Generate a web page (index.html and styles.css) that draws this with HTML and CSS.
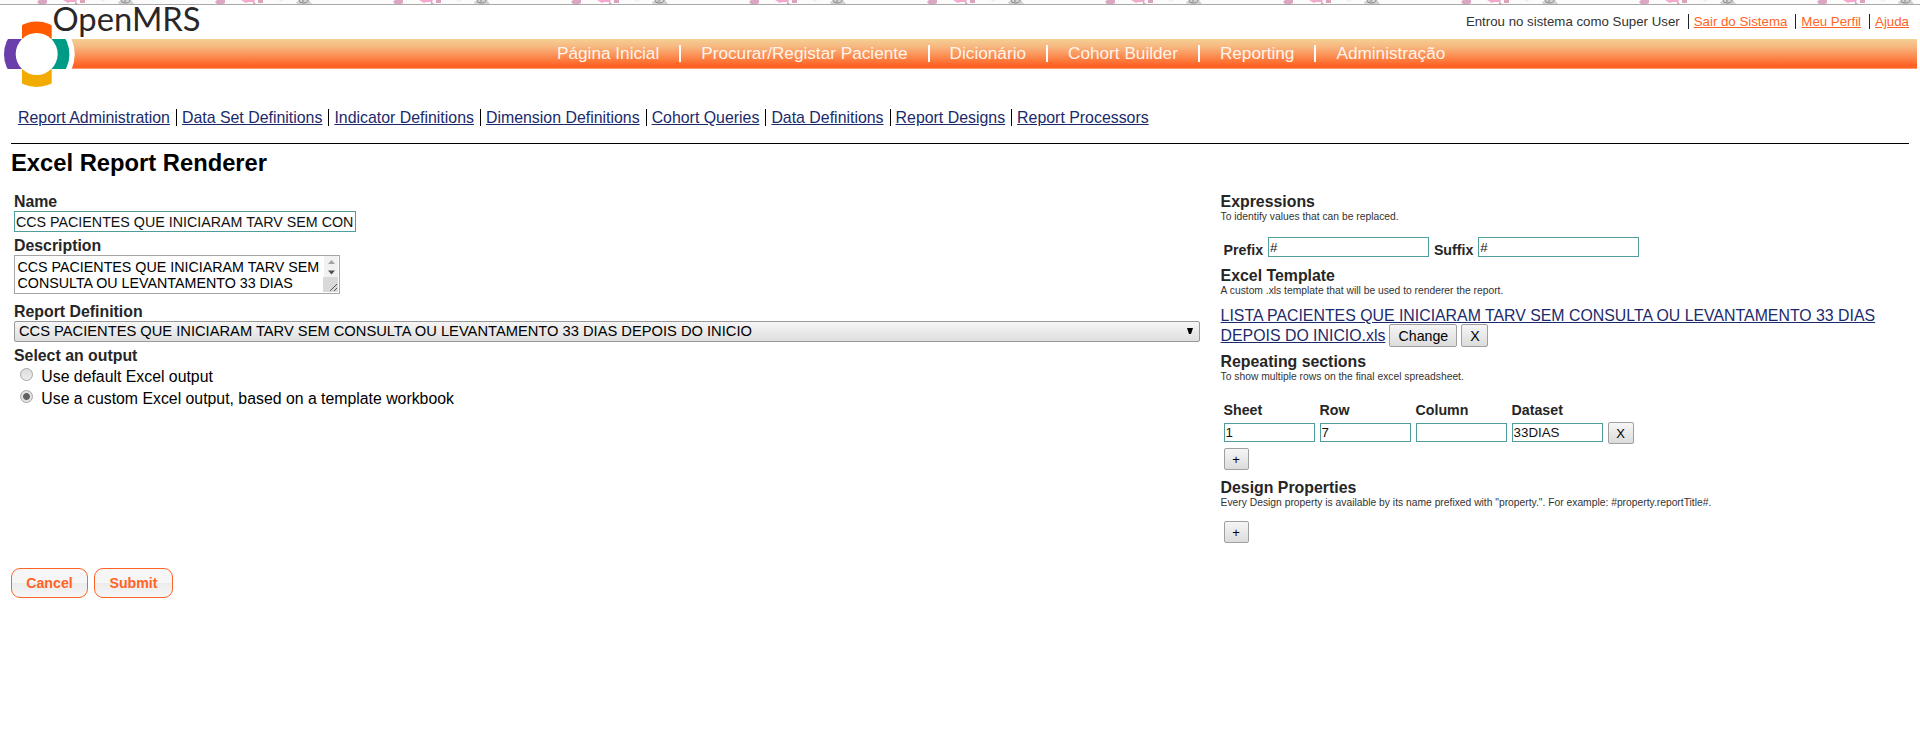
FILE: index.html
```html
<!DOCTYPE html>
<html lang="pt">
<head>
<meta charset="utf-8">
<title>OpenMRS - Excel Report Renderer</title>
<link rel="stylesheet" href="styles.css">
</head>
<body>
<svg class="strip" width="1920" height="5">
  <defs>
    <pattern id="flowers" width="178" height="5" patternUnits="userSpaceOnUse">
      <rect width="178" height="5" fill="#fbfbfb"/>
      <path d="M39 0h8v3l-2 1h-6l-2-2z" fill="#dda6c0"/>
      <path d="M63 0h14l-1 2h-6l-2 1z" fill="#f3a9cd"/>
      <path d="M75 1l3 3h-3zM80 0h5v3h-5z" fill="#dca3bd"/>
      <path d="M100 0h6l-3 2z" fill="#efefef"/>
      <path d="M118 2l4-2h9l3 4h-15z" fill="#d2d2d2"/>
      <path d="M121 0q0 3 4 3q5 0 5-3M125 0v2" fill="none" stroke="#888"/>
    </pattern>
  </defs>
  <rect width="1920" height="4" fill="url(#flowers)"/>
  <rect y="4" width="1920" height="1" fill="#a9a9a9"/>
</svg>

<header class="header">
  <ul class="user-bar">
    <li>Entrou no sistema como Super User</li>
    <li><a href="#">Sair do Sistema</a></li>
    <li><a href="#">Meu Perfil</a></li>
    <li><a href="#">Ajuda</a></li>
  </ul>
  <nav class="main-nav">
    <a href="#">Página Inicial</a>
    <a href="#">Procurar/Registar Paciente</a>
    <a href="#">Dicionário</a>
    <a href="#">Cohort Builder</a>
    <a href="#">Reporting</a>
    <a href="#">Administração</a>
  </nav>
  <svg class="logo" width="210" height="90" viewBox="0 0 210 90">
    <defs><clipPath id="disc"><circle cx="36.7" cy="54.3" r="32.7"/></clipPath></defs>
    <circle cx="36.7" cy="54.3" r="38" fill="#fff"/>
    <g clip-path="url(#disc)">
      <path d="M22 20h29.7v20H22z" fill="#ff5a00"/>
      <path d="M22 68h29.7v20H22z" fill="#f2ab00"/>
      <path d="M3 39h19v30H3z" fill="#6a3fac"/>
      <path d="M51.700 39h19v30h-19z" fill="#009b85"/>
    </g>
    <circle cx="36.7" cy="54" r="21" fill="#fff"/>
    <text class="logo-text" x="52.500" y="31" textLength="148" lengthAdjust="spacingAndGlyphs">OpenMRS</text>
  </svg>
</header>

<ul class="sub-nav">
  <li><a href="#">Report Administration</a></li>
  <li><a href="#">Data Set Definitions</a></li>
  <li><a href="#">Indicator Definitions</a></li>
  <li><a href="#">Dimension Definitions</a></li>
  <li><a href="#">Cohort Queries</a></li>
  <li><a href="#">Data Definitions</a></li>
  <li><a href="#">Report Designs</a></li>
  <li><a href="#">Report Processors</a></li>
</ul>

<main class="content">
  <h2 class="title">Excel Report Renderer</h2>
  <div class="columns">
    <section class="left">
      <div class="label">Name</div>
      <input class="field name" value="CCS PACIENTES QUE INICIARAM TARV SEM CON">
      <div class="label after-name">Description</div>
      <div class="textarea">
        <div class="textarea-text">CCS PACIENTES QUE INICIARAM TARV SEM<br>CONSULTA OU LEVANTAMENTO 33 DIAS</div>
        <svg class="scroll" width="16" height="37">
          <rect x="1" width="14" height="21" fill="#f1f1f1"/>
          <rect y="21" width="15" height="15" fill="#d9d9d9"/>
          <path d="M5 8l3.500-4 3.500 4z" fill="#a3a3a3"/>
          <path d="M5 14.500h7l-3.500 4z" fill="#505050"/>
          <path d="M7 35l7-7M11 35l3-3" stroke="#555" fill="none"/>
        </svg>
      </div>
      <div class="label after-area">Report Definition</div>
      <div class="select"><span>CCS PACIENTES QUE INICIARAM TARV SEM CONSULTA OU LEVANTAMENTO 33 DIAS DEPOIS DO INICIO</span>
        <svg width="6" height="7"><path d="M0 0h6L4 6h-2z" fill="#000"/></svg>
      </div>
      <div class="label after-name">Select an output</div>
      <label class="radio"><span class="dot"></span>Use default Excel output</label>
      <label class="radio"><span class="dot checked"></span>Use a custom Excel output, based on a template workbook</label>
    </section>

    <section class="right">
      <div class="label">Expressions</div>
      <div class="hint">To identify values that can be replaced.</div>
      <div class="affixes">
        <b>Prefix</b><input class="field affix" value="#">
        <b>Suffix</b><input class="field affix" value="#">
      </div>
      <div class="label template-label">Excel Template</div>
      <div class="hint">A custom .xls template that will be used to renderer the report.</div>
      <div class="file">
        <a href="#">LISTA PACIENTES QUE INICIARAM TARV SEM CONSULTA OU LEVANTAMENTO 33 DIAS</a>
        <div class="file-end"><a href="#">DEPOIS DO INICIO.xls</a><button class="btn change">Change</button><button class="btn remove">X</button></div>
      </div>
      <div class="label repeating">Repeating sections</div>
      <div class="hint">To show multiple rows on the final excel spreadsheet.</div>
      <div class="sections">
        <b>Sheet</b><b>Row</b><b>Column</b><b>Dataset</b><span></span>
        <input class="field cell" value="1">
        <input class="field cell" value="7">
        <input class="field cell" value="">
        <input class="field cell" value="33DIAS">
        <button class="btn row-remove">X</button>
      </div>
      <button class="btn add">+</button>
      <div class="label design">Design Properties</div>
      <div class="hint">Every Design property is available by its name prefixed with "property.". For example: #property.reportTitle#.</div>
      <button class="btn add add-property">+</button>
    </section>
  </div>
  <div class="actions">
    <button class="action cancel">Cancel</button>
    <button class="action submit">Submit</button>
  </div>
</main>
</body>
</html>
```

FILE: styles.css
```css
* { box-sizing: border-box; }
body {
  margin: 0;
  background: #fff;
  color: #000;
  font: 15.86px "Liberation Sans", Arial, sans-serif;
}
ul { list-style: none; margin: 0; padding: 0; }
.strip { display: block; }

.header { position: relative; height: 104px; }
.user-bar {
  display: flex;
  justify-content: flex-end;
  height: 34px;
  padding: 9px 11px 0 0;
  font-size: 13.28px;
  line-height: 15px;
  color: #333;
}
.user-bar li { height: 15px; white-space: nowrap; }
.user-bar li + li { margin-left: 8px; padding-left: 5px; border-left: 1px solid #222; }
.user-bar a { color: #ff6426; }
.main-nav {
  display: flex;
  height: 30px;
  margin: 0 3px 0 71px;
  padding: 6px 0 0 466px;
  border-bottom: 1px solid #ff9a6c;
  background: linear-gradient(#f5cf94, #f7b67e 28%, #ff6426 90%, #ff6020);
  font-size: 17.2px;
  line-height: 17px;
}
.main-nav a {
  height: 17px;
  padding: 0 20px;
  color: #fff5ec;
  text-decoration: none;
  white-space: nowrap;
}
.main-nav a + a { border-left: 2px solid #fff; }
.logo { position: absolute; left: 0; top: -5px; overflow: visible; }
.logo-text { font: 33px Lato, sans-serif; fill: #2b2728; }

.sub-nav { display: flex; height: 34px; padding-left: 18px; font-size: 15.9px; line-height: 17px; }
.sub-nav li { height: 17px; white-space: nowrap; }
.sub-nav li + li { margin-left: 6px; padding-left: 5px; border-left: 1px solid #000; }
.sub-nav a, .file a { color: #1b2a6b; }

.content { margin: 0 11px; border-top: 1px solid #000; }
.title { height: 47px; margin: 0; padding-top: 5px; font-size: 23.75px; line-height: 27px; }
.columns { display: grid; grid-template-columns: 1186px 680px; gap: 20.6px; height: 377px; padding-left: 3px; }
.label { height: 20px; font-weight: bold; line-height: 22px; color: #262626; }
.hint { height: 12px; font-size: 10.3px; line-height: 12px; color: #333; white-space: nowrap; }
.field {
  display: block;
  margin: 0;
  padding: 0 1px;
  border: 1px solid #4f9e9b;
  background: #fff;
  color: #111;
  font: 13.3px "Liberation Sans", Arial, sans-serif;
}
.name { width: 342px; height: 21px; font-size: 14.27px; }
.after-name { margin-top: 3px; }
.after-area { margin-top: 7px; }
.textarea {
  display: flex;
  justify-content: space-between;
  width: 326px;
  height: 39px;
  border: 1px solid #a6a6a6;
  font-size: 14.27px;
  line-height: 16px;
}
.textarea-text { padding: 3px 0 0 2.5px; white-space: nowrap; }
.select {
  display: flex;
  justify-content: space-between;
  align-items: center;
  height: 21px;
  padding: 0 6px 0 4px;
  border: 1px solid #999;
  border-radius: 2px;
  background: linear-gradient(#f6f6f6, #dedede);
  font-size: 14.69px;
  line-height: 19px;
}
.radio { display: flex; height: 22px; font-size: 15.83px; line-height: 23px; }
.dot {
  width: 13px;
  height: 13px;
  margin: 3px 8.3px 0 6px;
  border: 1px solid #a5a5a5;
  border-radius: 50%;
  background: linear-gradient(#dcdcdc, #eee);
}
.checked { background: radial-gradient(circle, #606060 0 3px, #e2e2e2 3.8px); }

.right b { font-size: 14.2px; line-height: 16px; color: #262626; }
.affixes { display: flex; height: 34px; margin-top: 14px; padding-left: 3px; }
.affixes b { width: 44.3px; padding-top: 5px; }
.affix { width: 161px; height: 20px; margin-right: 5px; }
.template-label { margin-top: -6px; }
.file { height: 54px; padding-top: 8px; line-height: 20px; white-space: nowrap; }
.file > a { display: block; height: 20px; margin-top: 1px; }
.file-end { display: flex; height: 24px; }
.btn {
  display: block;
  padding: 0;
  border: 1px solid #a0a0a0;
  border-radius: 2px;
  background: linear-gradient(#f6f6f6, #dcdcdc);
  color: #000;
  font: 13px "Liberation Sans", Arial, sans-serif;
}
.change, .remove { height: 23px; margin-top: -2px; font-size: 14.2px; }
.change { width: 68px; margin-left: 4px; }
.remove { width: 27px; margin-left: 4px; }
.sections {
  display: grid;
  grid-template-columns: 91px 91px 91px 91px 26px;
  grid-template-rows: 20px 22px;
  column-gap: 5px;
  margin-top: 19px;
  padding-left: 3px;
}
.cell { width: 91px; height: 19px; margin-top: 1px; }
.row-remove { height: 22px; }
.add { width: 25px; height: 22px; margin: 4px 0 0 3px; }
.design { margin-top: 7px; }
.add-property { margin-top: 12px; }

.actions { display: flex; gap: 6px; }
.action {
  height: 30px;
  padding: 0;
  border: 1px solid #ff6426;
  border-radius: 9px;
  background: linear-gradient(#f6f6f6 50%, #ececec 50%, #f6f6f6);
  color: #ff6426;
  font: bold 14.2px "Liberation Sans", Arial, sans-serif;
}
.cancel { width: 77px; }
.submit { width: 79px; }
```
